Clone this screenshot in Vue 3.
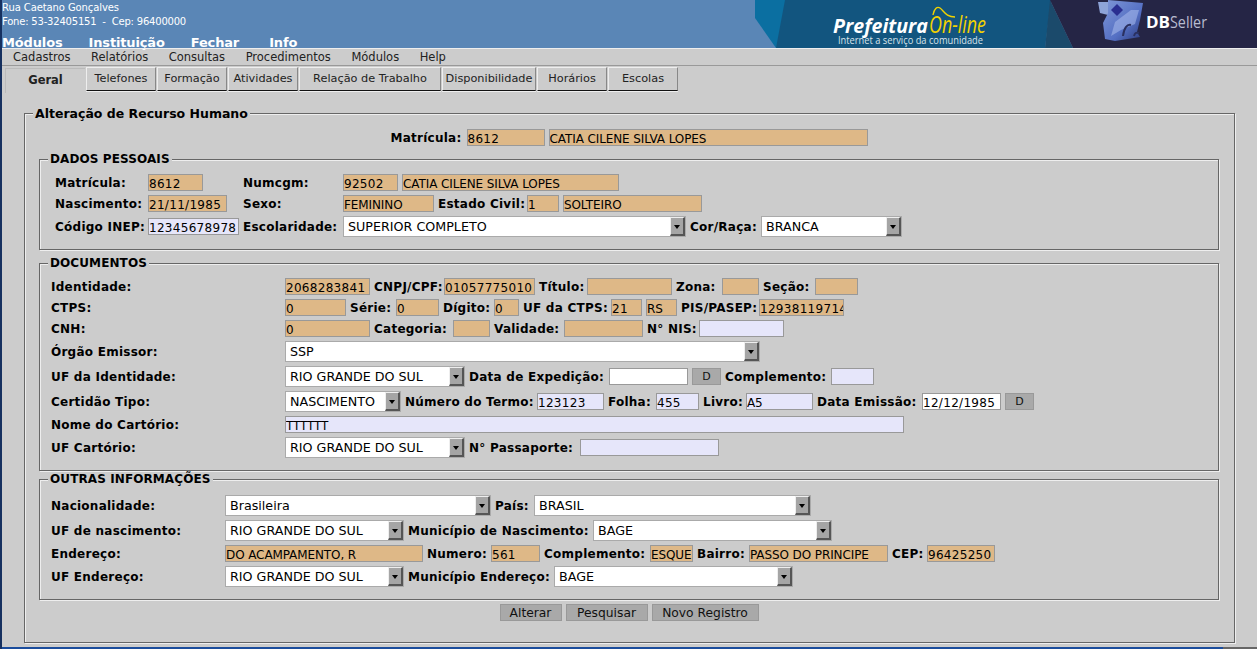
<script setup>
// row items: l = label (width is the space up to the next field), i = input, s = select, b = small date button
const l = (text, w) => ({ kind: 'label', text, w })
const i = (value, w, tone = 'ro') => ({ kind: 'input', value, w, tone, num: /^\d/.test(value) })
const s = (value, w) => ({ kind: 'select', value, w })
const d = () => ({ kind: 'btn', text: 'D', w: 29 })
const gap = (w) => ({ kind: 'gap', w })

const topRow = [l('Matrícula:', 72), i('8612', 78), i('CATIA CILENE SILVA LOPES', 319)]

const pessoais = [
  [l('Matrícula:', 89), i('8612', 55), gap(32), l('Numcgm:', 96), i('92502', 55), i('CATIA CILENE SILVA LOPES', 217)],
  [l('Nascimento:', 89), i('21/11/1985', 79), gap(8), l('Sexo:', 96), i('FEMININO', 91), l('Estado Civil:', 85), i('1', 32), i('SOLTEIRO', 139)],
  [l('Código INEP:', 89), i('12345678978', 91, 'edit'), l('Escolaridade:', 96), s('SUPERIOR COMPLETO', 343), l('Cor/Raça:', 67), s('BRANCA', 141)],
]

const documentos = [
  [l('Identidade:', 230), i('2068283841', 85), l('CNPJ/CPF:', 66), i('01057775010', 91), l('Título:', 44), i('', 85), l('Zona:', 42), i('', 37), l('Seção:', 48), i('', 43)],
  [l('CTPS:', 230), i('0', 61), l('Série:', 42), i('0', 43), l('Dígito:', 47), i('0', 25), l('UF da CTPS:', 84), i('21', 31), i('RS', 31), l('PIS/PASEP:', 74), i('12938119714', 85)],
  [l('CNH:', 230), i('0', 85), l('Categoria:', 75), i('', 37), l('Validade:', 66), i('', 79), l('N° NIS:', 48), i('', 85, 'edit')],
  [l('Órgão Emissor:', 230), s('SSP', 475)],
  [l('UF da Identidade:', 230), s('RIO GRANDE DO SUL', 180), l('Data de Expedição:', 136), i('', 79, 'white'), d(), l('Complemento:', 102), i('', 43, 'edit')],
  [l('Certidão Tipo:', 230), s('NASCIMENTO', 116), l('Número do Termo:', 128), i('123123', 67, 'edit'), l('Folha:', 44), i('455', 43, 'edit'), l('Livro:', 39), i('A5', 67, 'edit'), l('Data Emissão:', 101), i('12/12/1985', 79, 'white'), d()],
  [l('Nome do Cartório:', 230), i('TTTTTT', 619, 'edit')],
  [l('UF Cartório:', 230), s('RIO GRANDE DO SUL', 180), l('N° Passaporte:', 107), i('', 139, 'edit')],
]

const outras = [
  [l('Nacionalidade:', 170), s('Brasileira', 266), l('País:', 35), s('BRASIL', 277)],
  [l('UF de nascimento:', 170), s('RIO GRANDE DO SUL', 179), l('Município de Nascimento:', 181), s('BAGE', 239)],
  [l('Endereço:', 170), i('DO ACAMPAMENTO, R', 198), l('Numero:', 60), i('561', 49), l('Complemento:', 102), i('ESQUE', 43), l('Bairro:', 48), i('PASSO DO PRINCIPE', 139), l('CEP:', 31), i('96425250', 68)],
  [l('UF Endereço:', 170), s('RIO GRANDE DO SUL', 179), l('Município Endereço:', 142), s('BAGE', 239)],
]

const groups = [
  { title: 'DADOS PESSOAIS', cls: 'pessoais', rows: pessoais },
  { title: 'DOCUMENTOS', cls: 'documentos', rows: documentos },
  { title: 'OUTRAS INFORMAÇÕES', cls: 'outras', rows: outras },
]

const menu = ['Módulos', 'Instituição', 'Fechar', 'Info']
const subMenu = ['Cadastros', 'Relatórios', 'Consultas', 'Procedimentos', 'Módulos', 'Help']
const tabs = [
  { text: 'Telefones', w: 70 },
  { text: 'Formação', w: 70 },
  { text: 'Atividades', w: 70 },
  { text: 'Relação de Trabalho', w: 142 },
  { text: 'Disponibilidade', w: 94 },
  { text: 'Horários', w: 70 },
  { text: 'Escolas', w: 70 },
]
</script>

<template>
  <div class="page">
    <header class="top">
      <div class="top-left">
        <div class="addr">Rua Caetano Gonçalves</div>
        <div class="addr">Fone: 53-32405151&nbsp; -&nbsp; Cep: 96400000</div>
        <nav class="main-menu">
          <span v-for="m in menu" :key="m">{{ m }}</span>
        </nav>
      </div>
      <svg class="banner" width="502" height="48" viewBox="0 0 502 48">
        <defs>
          <linearGradient id="cube" x1="0" y1="0" x2="1" y2="1">
            <stop offset="0" stop-color="#7f97d6" />
            <stop offset="0.6" stop-color="#5570c4" />
            <stop offset="1" stop-color="#2b3a7c" />
          </linearGradient>
        </defs>
        <rect width="502" height="48" fill="#5a86b6" />
        <polygon points="0,0 32,0 23,48 21,48 0,18" fill="#0b6fa1" />
        <polygon points="30,0 296,0 290,48 21,48" fill="#12557f" />
        <polygon points="295,0 318,48 290,48" fill="#1b4a6b" />
        <polygon points="295,0 502,0 502,48 318,48" fill="#252545" />
        <text x="78" y="33" class="pref" textLength="95" lengthAdjust="spacingAndGlyphs">Prefeitura</text>
        <text x="174" y="33" class="online" textLength="57" lengthAdjust="spacingAndGlyphs">On-line</text>
        <path d="M178 15 C179 9 182 6 185 8 C189 11 191 17 200 17" fill="none" stroke="#f2d200" stroke-width="1.4" />
        <text x="83" y="44" class="tagline" textLength="145" lengthAdjust="spacingAndGlyphs">Internet a serviço da comunidade</text>
        <polygon points="343,2 353,2 353,15 345,13" fill="#8ea4d8" />
        <polygon points="353,0 388,3 385,20 382,32 385,37 360,41 350,39 348,23 353,13" fill="url(#cube)" />
        <polygon points="356,10 362,4 368,10 362,16" fill="#2a2f90" />
        <polygon points="356,36 360,22 376,10 384,10 380,24 366,30" fill="#a9bbec" opacity="0.55" />
        <path d="M368 36 C369 28 372 24 376 25 M379 36 C380 33 381 32 384 33" fill="none" stroke="#2a3060" stroke-width="2" />
        <text x="391" y="28" class="db" textLength="24" lengthAdjust="spacingAndGlyphs">DB</text>
        <text x="415" y="28" class="seller" textLength="37" lengthAdjust="spacingAndGlyphs">Seller</text>
      </svg>
    </header>

    <nav class="sub-menu">
      <span v-for="m in subMenu" :key="m">{{ m }}</span>
    </nav>

    <div class="tabs">
      <div class="tab active">Geral</div>
      <div v-for="t in tabs" :key="t.text" class="tab" :style="{ width: t.w + 'px' }">{{ t.text }}</div>
    </div>

    <main class="content">
      <fieldset class="box outer">
        <legend>Alteração de Recurso Humano</legend>

        <div class="outer-body">
          <div class="row center">
            <template v-for="(it, n) in topRow" :key="n">
              <label v-if="it.kind === 'label'" class="lbl" :style="{ width: it.w + 'px' }">{{ it.text }}</label>
              <input v-else class="field ro" :class="{ num: it.num }" readonly :value="it.value" :style="{ width: it.w + 'px' }" />
            </template>
          </div>

          <fieldset v-for="g in groups" :key="g.title" class="box" :class="g.cls">
            <legend>{{ g.title }}</legend>
            <div class="rows">
              <div v-for="(row, r) in g.rows" :key="r" class="row">
                <template v-for="(it, n) in row" :key="n">
                  <span v-if="it.kind === 'gap'" :style="{ width: it.w + 'px' }"></span>
                  <label v-else-if="it.kind === 'label'" class="lbl" :style="{ width: it.w + 'px' }">{{ it.text }}</label>
                  <input v-else-if="it.kind === 'input'" class="field" :class="[it.tone, { num: it.num }]" readonly :value="it.value" :style="{ width: it.w + 'px' }" />
                  <div v-else-if="it.kind === 'select'" class="select" :style="{ width: it.w + 'px' }">
                    <span class="select-value">{{ it.value }}</span>
                    <span class="arrow"></span>
                  </div>
                  <button v-else class="date-btn" type="button" :style="{ width: it.w + 'px' }">{{ it.text }}</button>
                </template>
              </div>
            </div>
          </fieldset>

          <div class="actions">
            <button type="button" class="act-a">Alterar</button>
            <button type="button" class="act-b">Pesquisar</button>
            <button type="button" class="act-c">Novo Registro</button>
          </div>
        </div>
      </fieldset>
    </main>

    <div class="bottom-strip"></div>
  </div>
</template>

<style>
html, body {
  margin: 0;
  background: #cccccc;
}
</style>

<style scoped>
.page {
  display: flex;
  flex-direction: column;
  width: 1257px;
  height: 649px;
  overflow: hidden;
  box-sizing: border-box;
  border-left: 2px solid #16305f;
  background: #cccccc;
  font-family: "DejaVu Sans", sans-serif;
  color: #000;
}

.top {
  display: flex;
  flex: none;
  justify-content: space-between;
  height: 48px;
  margin-left: -2px;
  padding-left: 2px;
  background: #5a86b6;
}

.top-left {
  padding-top: 1px;
  color: #fff;
}

.addr {
  font-size: 10px;
  line-height: 13px;
  letter-spacing: -0.1px;
}

.addr + .addr {
  letter-spacing: -0.2px;
  margin-top: 1px;
}

.main-menu {
  display: flex;
  gap: 26px;
  margin-top: 9px;
  font-size: 13px;
  font-weight: bold;
  line-height: 11px;
  letter-spacing: -0.15px;
}

.main-menu span:last-child {
  margin-left: 4px;
}

.banner {
  display: block;
  flex: none;
}

.pref {
  font: italic bold 20px "Open Sans", sans-serif;
  fill: #fff;
}

.online {
  font: italic 23px "Open Sans", sans-serif;
  fill: #f2d200;
}

.tagline {
  font: 10px "Open Sans", sans-serif;
  fill: #d7e3ea;
}

.db {
  font: bold 15.5px "Open Sans", sans-serif;
  fill: #fff;
}

.seller {
  font: 15.5px "Open Sans", sans-serif;
  fill: #b8bcd0;
}

.sub-menu {
  display: flex;
  flex: none;
  gap: 20.5px;
  height: 18px;
  padding-left: 11px;
  box-sizing: border-box;
  border-top: 1px solid #eee;
  border-bottom: 1px solid #999;
  font-size: 11.5px;
  line-height: 16px;
  color: #222;
}

.tabs {
  display: flex;
  flex: none;
  align-items: flex-start;
  gap: 1px;
  height: 25px;
  box-sizing: border-box;
  padding: 1px 0 0 3px;
  font-size: 11.3px;
  color: #222;
}

.tab {
  box-sizing: border-box;
  height: 24px;
  border-top: 1px solid #eee;
  border-left: 1px solid #eee;
  border-right: 1px solid #888;
  border-bottom: 1px solid #111;
  box-shadow: 0 1px 0 #eee;
  text-align: center;
  line-height: 22px;
}

.tab.active {
  width: 80px;
  height: 25px;
  margin-top: 1px;
  border: 0;
  border-top: 1px solid #bbb;
  border-left: 1px solid #bbb;
  box-shadow: none;
  font-size: 11.5px;
  font-weight: bold;
  line-height: 23px;
}

.content {
  flex: 1;
  padding: 15px 22px 0 22px;
}

.box {
  margin: 0;
  padding: 0;
  border: 1px solid #666;
  box-shadow: 1px 1px 0 #eee, inset 1px 1px 0 #eee;
  min-width: 0;
}

.box legend {
  margin-left: 8px;
  padding: 0 2px;
  background: #cccccc;
  font-size: 12px;
  font-weight: bold;
  line-height: 15px;
  letter-spacing: 0.1px;
}

.outer {
  height: 537px;
  box-sizing: border-box;
}

.outer > legend {
  font-size: 12.5px;
  letter-spacing: 0;
}

.outer-body {
  padding: 8px 15px 0 14px;
}

.pessoais {
  margin-top: 6px;
}

.pessoais .rows {
  padding: 7px 15px 8px 15px;
}

.documentos {
  margin-top: 6px;
}

.documentos .rows {
  padding: 7px 11px 8px 11px;
}

.outras {
  margin-top: 1px;
}

.outras .rows {
  padding: 8px 11px 8px 11px;
}

.row {
  display: flex;
  align-items: center;
  gap: 4px;
  margin-bottom: 4px;
}

.row.center {
  justify-content: center;
  margin-bottom: 6px;
}

.lbl {
  flex: none;
  font-size: 12px;
  font-weight: bold;
  white-space: nowrap;
  letter-spacing: 0.25px;
}

.field {
  flex: none;
  box-sizing: border-box;
  height: 17px;
  margin: 0;
  padding: 2px 0 0;
  border: 1px solid #999;
  outline: none;
  border-radius: 0;
  font: 12px "DejaVu Sans", sans-serif;
  letter-spacing: -0.1px;
  color: #000;
}

.field.num {
  letter-spacing: 0.3px;
}

.field.ro {
  background: #deb887;
}

.field.edit {
  background: #e6e6fa;
}

.field.white {
  background: #fff;
}

.select {
  flex: none;
  display: flex;
  box-sizing: border-box;
  height: 21px;
  border: 1px solid #aaa;
  background: #fff;
  font-size: 12.7px;
  line-height: 19px;
}

.select-value {
  flex: 1;
  padding-left: 4px;
  white-space: nowrap;
  overflow: hidden;
}

.arrow {
  position: relative;
  flex: none;
  box-sizing: border-box;
  width: 15px;
  border-top: 1px solid #eee;
  border-left: 1px solid #eee;
  border-right: 2px solid #555;
  border-bottom: 2px solid #555;
  background: #a5a5a5;
}

.arrow::after {
  content: "";
  position: absolute;
  left: 3px;
  top: 7px;
  border-left: 3.5px solid transparent;
  border-right: 3.5px solid transparent;
  border-top: 4px solid #000;
}

.date-btn {
  flex: none;
  box-sizing: border-box;
  height: 17px;
  padding: 0;
  border: 1px solid #999;
  background: #a9a9a9;
  font: 11px "DejaVu Sans", sans-serif;
  color: #111;
}

.actions {
  display: flex;
  justify-content: center;
  gap: 4px;
  margin-top: 4px;
}

.actions button {
  box-sizing: border-box;
  height: 17px;
  padding: 1px 0 0;
  border: 1px solid #999;
  background: #a9a9a9;
  font: 12.3px "DejaVu Sans", sans-serif;
  color: #111;
}

.act-a {
  width: 62px;
}

.act-b {
  width: 82px;
}

.act-c {
  width: 107px;
}

.bottom-strip {
  flex: none;
  height: 2px;
  margin-left: -2px;
  background: linear-gradient(90deg, #1a4c9c 1223px, #666 1223px);
}
</style>
